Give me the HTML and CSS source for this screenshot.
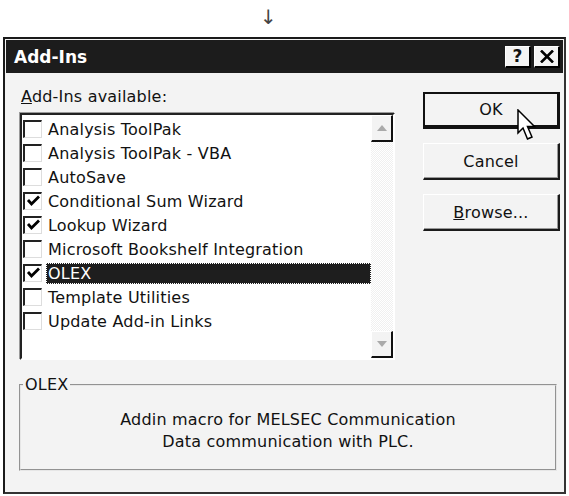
FILE: index.html
```html
<!DOCTYPE html>
<html lang="en">
<head>
  <meta charset="UTF-8">
  <title>Add-Ins</title>
  <link rel="stylesheet" href="styles.css">
</head>
<body>
  <div class="arrow">&darr;</div>
  <div class="dialog">
    <div class="titlebar">
      <span class="title">Add-Ins</span>
      <div class="caption-buttons">
        <span class="cap-btn">?</span>
        <span class="cap-btn close">
          <svg width="14" height="13" viewBox="0 0 14 13"><path d="M1 0.5 L13 12.5 M13 0.5 L1 12.5" stroke="#000" stroke-width="2.6" fill="none"/></svg>
        </span>
      </div>
    </div>

    <div class="main">
      <div class="left">
        <div class="label"><u>A</u>dd-Ins available:</div>
        <div class="listbox">
          <ul class="items">
            <li><span class="check"></span><span class="text">Analysis ToolPak</span></li>
            <li><span class="check"></span><span class="text">Analysis ToolPak - VBA</span></li>
            <li><span class="check"></span><span class="text">AutoSave</span></li>
            <li><span class="check on"></span><span class="text">Conditional Sum Wizard</span></li>
            <li><span class="check on"></span><span class="text">Lookup Wizard</span></li>
            <li><span class="check"></span><span class="text">Microsoft Bookshelf Integration</span></li>
            <li class="selected"><span class="check on"></span><span class="text">OLEX</span></li>
            <li><span class="check"></span><span class="text">Template Utilities</span></li>
            <li><span class="check"></span><span class="text">Update Add-in Links</span></li>
          </ul>
          <div class="scrollbar">
            <div class="sb-btn"><svg width="10" height="6" viewBox="0 0 10 6"><path d="M5 0 L10 6 L0 6 Z" fill="#aaa"/></svg></div>
            <div class="sb-track"></div>
            <div class="sb-btn"><svg width="10" height="6" viewBox="0 0 10 6"><path d="M0 0 L10 0 L5 6 Z" fill="#aaa"/></svg></div>
          </div>
        </div>
      </div>

      <div class="buttons">
        <div class="btn default">OK
          <svg class="cursor" width="21" height="33" viewBox="0 0 21 33"><path d="M1 1 L1 24 L6 19 L10.5 30 L15 28 L10.5 17.5 L17.5 17.5 Z" fill="#fff" stroke="#000" stroke-width="1.5" stroke-linejoin="miter"/></svg>
        </div>
        <div class="btn">Cancel</div>
        <div class="btn"><u>B</u>rowse...</div>
      </div>
    </div>

    <fieldset class="group">
      <legend>OLEX</legend>
      <p>Addin macro for MELSEC Communication<br>Data communication with PLC.</p>
    </fieldset>
  </div>
</body>
</html>
```

FILE: styles.css
```css
body {
  margin: 0;
  width: 569px;
  height: 496px;
  background: #fff;
  font-family: "DejaVu Sans", Verdana, sans-serif;
  font-size: 16px;
  letter-spacing: 0.2px;
  color: #111;
  overflow: hidden;
}
.arrow {
  height: 37px;
  padding-left: 260px;
  font-size: 20px;
  line-height: 34px;
  color: #444;
}
.dialog {
  margin-left: 3px;
  width: 563px;
  height: 457px;
  box-sizing: border-box;
  border: 2px solid #1a1a1a;
  border-right-color: #333;
  border-bottom-color: #333;
  background: #f3f3f3;
  padding: 1px;
}
.titlebar {
  height: 33px;
  background: #1c1c1c;
  display: flex;
  align-items: center;
  justify-content: space-between;
  padding: 0 3px 0 8px;
}
.title {
  color: #fff;
  font-weight: bold;
  font-size: 17px;
  letter-spacing: 0;
}
.caption-buttons {
  display: flex;
  gap: 3px;
}
.cap-btn {
  width: 26px;
  height: 22px;
  box-sizing: border-box;
  background: #f3f3f3;
  border-top: 1px solid #fff;
  border-left: 1px solid #fff;
  border-right: 2px solid #000;
  border-bottom: 2px solid #000;
  font-weight: bold;
  font-size: 17px;
  line-height: 20px;
  text-align: center;
  display: flex;
  align-items: center;
  justify-content: center;
}
.main {
  display: flex;
  padding: 15px 0 0 14px;
}
.left {
  width: 375px;
}
.label {
  height: 25px;
  line-height: 18px;
  padding-left: 1px;
}
.listbox {
  width: 375px;
  height: 247px;
  box-sizing: border-box;
  border-top: 2px solid #222;
  border-left: 2px solid #222;
  border-right: 2px solid #fff;
  border-bottom: 2px solid #fff;
  box-shadow: -1px -1px 0 #9a9a9a;
  background: #fff;
  display: flex;
}
.items {
  list-style: none;
  margin: 0;
  padding: 2px 0 0 0;
  flex: 1;
}
.items li {
  height: 24px;
  display: flex;
  align-items: center;
}
.check {
  width: 19px;
  height: 18px;
  box-sizing: border-box;
  margin: 0 6px 0 1px;
  border-top: 2px solid #222;
  border-left: 2px solid #222;
  border-right: 1px solid #ddd;
  border-bottom: 1px solid #ddd;
  background: #fff;
}
.check.on {
  background: #fff url("data:image/svg+xml;utf8,<svg xmlns='http://www.w3.org/2000/svg' width='15' height='15'><path d='M2 6 L5.5 10 L13 2.5' stroke='black' stroke-width='2.8' fill='none'/></svg>") no-repeat 1px 0;
}
.text {
  height: 21px;
  line-height: 21px;
  padding: 0 2px;
  margin-left: -2px;
}
.selected .text {
  flex: 1;
  background: #1e1e1e;
  color: #fff;
  outline: 1px dotted #fff;
  outline-offset: -1px;
}
.scrollbar {
  width: 22px;
  display: flex;
  flex-direction: column;
}
.sb-btn {
  height: 27px;
  box-sizing: border-box;
  background: #f3f3f3;
  border-top: 1px solid #fff;
  border-left: 1px solid #fff;
  border-right: 2px solid #111;
  border-bottom: 2px solid #111;
  display: flex;
  align-items: center;
  justify-content: center;
}
.sb-track {
  flex: 1;
  background: repeating-conic-gradient(#fff 0 25%, #f0f0f0 0 50%) 0 0 / 2px 2px;
}
.buttons {
  margin-left: 28px;
  width: 137px;
  display: flex;
  flex-direction: column;
  gap: 14px;
  padding-top: 4px;
}
.btn {
  position: relative;
  height: 37px;
  box-sizing: border-box;
  border-top: 1px solid #fff;
  border-left: 1px solid #fff;
  border-right: 2px solid #1a1a1a;
  border-bottom: 2px solid #1a1a1a;
  box-shadow: inset -1px -1px 0 #999;
  display: flex;
  align-items: center;
  justify-content: center;
}
.btn.default {
  height: 37px;
  border: 2px solid #111;
  border-right-width: 3px;
  border-bottom-width: 4px;
  box-shadow: none;
}
.cursor {
  position: absolute;
  left: 92px;
  top: 15px;
}
.group {
  margin: 17px 0 0 13px;
  width: 538px;
  height: 94px;
  box-sizing: border-box;
  border: 2px groove #e6e6e6;
  padding: 0 2px;
}
.group legend {
  padding: 0 2px;
  margin-left: 0;
  line-height: 16px;
}
.group p {
  margin: 16px 0 0;
  text-align: center;
  line-height: 22px;
}
```
